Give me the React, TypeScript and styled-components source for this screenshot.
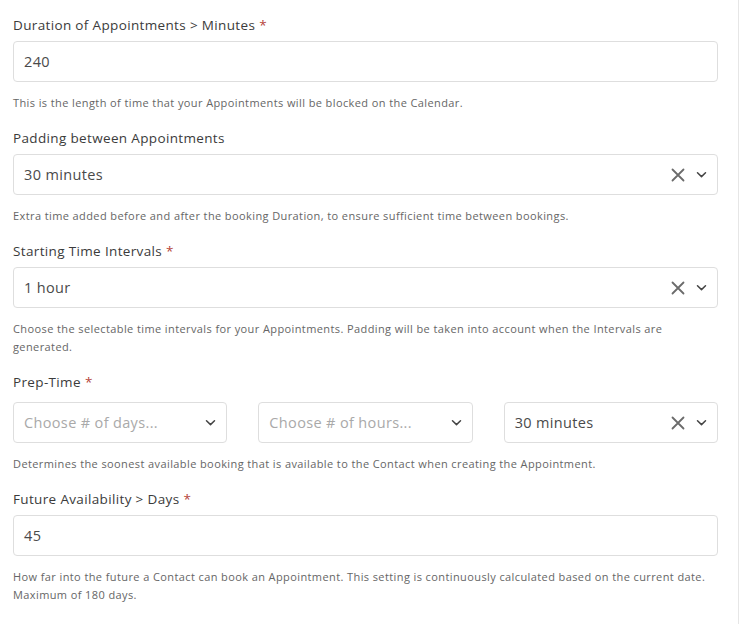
import { FC } from 'react';
import styled, { createGlobalStyle } from 'styled-components';

const GlobalStyle = createGlobalStyle`
  html, body {
    margin: 0;
    padding: 0;
    background: #ffffff;
  }
  body {
    font-family: 'Open Sans', 'Liberation Sans', sans-serif;
  }
`

const Panel = styled.div`
  width: 739px;
  height: 624px;
  box-sizing: border-box;
  border-right: 1px solid #e6e6e6;
  padding: 15px 20px 0 13px;
  display: flex;
  flex-direction: column;
  gap: 16px;
`
const Field = styled.div`
  display: flex;
  flex-direction: column;
`
const Label = styled.label`
  font-size: 13.5px;
  line-height: 20px;
  letter-spacing: 0.35px;
  color: #3b3b3b;
  margin-bottom: 6px;
`
const Required = styled.span`
  color: #b5443a;
  margin-left: 4px;
`
const Box = styled.div<{ $placeholder?: boolean }>`
  height: 41px;
  box-sizing: border-box;
  border: 1px solid #dedede;
  border-radius: 4px;
  display: flex;
  align-items: center;
  padding: 0 10px;
  font-size: 14.5px;
  letter-spacing: 0.35px;
  color: ${p => (p.$placeholder ? '#a9a9a9' : '#4a4a4a')};
`
const Value = styled.span`
  flex: 1;
`
const Row = styled.div`
  display: flex;
  gap: 31px;
  margin-top: 4px;

  & > * {
    flex: 1;
  }
`
const Help = styled.p`
  margin: 12px 0 0;
  font-size: 11px;
  line-height: 18px;
  letter-spacing: 0.4px;
  color: #666666;
`
const Icons = styled.div`
  display: flex;
  align-items: center;
  gap: 11px;
`

const ClearIcon: FC = () => (
  <svg width="14" height="14" viewBox="0 0 14 14">
    <path d="M1.5 1.5 L12.5 12.5 M12.5 1.5 L1.5 12.5" stroke="#6b6b6b" strokeWidth="1.8" strokeLinecap="round" />
  </svg>
)

const Chevron: FC = () => (
  <svg width="11" height="11" viewBox="0 0 11 11">
    <path d="M1.5 3.8 L5.5 7.6 L9.5 3.8" stroke="#444" strokeWidth="1.5" fill="none" strokeLinecap="round" strokeLinejoin="round" />
  </svg>
)

interface SelectProps {
  value?: string;
  placeholder?: string;
  clearable?: boolean;
}

const Select: FC<SelectProps> = ({ value, placeholder, clearable }) => (
  <Box $placeholder={!value}>
    <Value>{value || placeholder}</Value>
    <Icons>
      {clearable && value && <ClearIcon />}
      <Chevron />
    </Icons>
  </Box>
)

const App: FC = () => {
  return (
    <>
      <GlobalStyle />
      <Panel>
        <Field>
          <Label>Duration of Appointments &gt; Minutes<Required>*</Required></Label>
          <Box>240</Box>
          <Help>This is the length of time that your Appointments will be blocked on the Calendar.</Help>
        </Field>
        <Field>
          <Label>Padding between Appointments</Label>
          <Select value="30 minutes" clearable />
          <Help>Extra time added before and after the booking Duration, to ensure sufficient time between bookings.</Help>
        </Field>
        <Field>
          <Label>Starting Time Intervals<Required>*</Required></Label>
          <Select value="1 hour" clearable />
          <Help>Choose the selectable time intervals for your Appointments. Padding will be taken into account when the Intervals are generated.</Help>
        </Field>
        <Field>
          <Label>Prep-Time<Required>*</Required></Label>
          <Row>
            <Select placeholder="Choose # of days..." />
            <Select placeholder="Choose # of hours..." />
            <Select value="30 minutes" clearable />
          </Row>
          <Help>Determines the soonest available booking that is available to the Contact when creating the Appointment.</Help>
        </Field>
        <Field>
          <Label>Future Availability &gt; Days<Required>*</Required></Label>
          <Box>45</Box>
          <Help>How far into the future a Contact can book an Appointment. This setting is continuously calculated based on the current date. Maximum of 180 days.</Help>
        </Field>
      </Panel>
    </>
  );
};

export default App;
